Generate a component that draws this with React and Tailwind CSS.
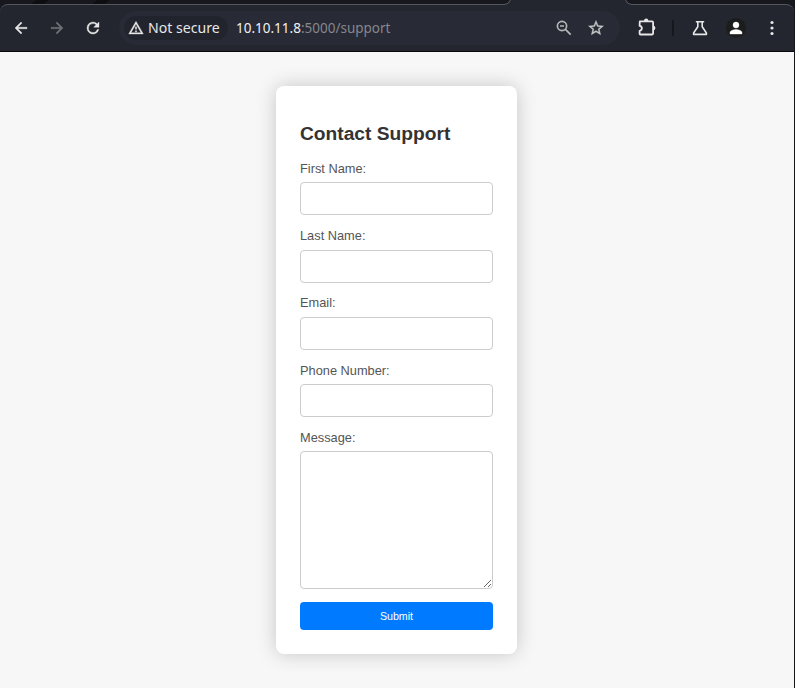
import React from "react";

const FIELDS = ["First Name:", "Last Name:", "Email:", "Phone Number:"];

function Icon({ d, size = 18, className = "" }) {
  return (
    <svg
      viewBox="0 0 24 24"
      width={size}
      height={size}
      fill="currentColor"
      stroke="currentColor"
      strokeWidth="0.5"
      className={"shrink-0 " + className}
    >
      <path d={d} />
    </svg>
  );
}

function TabStrip() {
  return (
    <div className="relative z-10 -mb-px flex h-[5px] w-full shrink-0 overflow-hidden">
      <div className="absolute top-0 left-[34px] h-1 w-3 -skew-x-[50deg] bg-[#0d0e11]" />
      <div className="absolute top-0 left-[95px] h-1 w-3 -skew-x-[50deg] bg-[#0d0e11]" />
      <div className="flex h-[5px] w-full items-end">
        <div className="h-[5px] w-[503px] shrink-0" />
        <div className="flex h-[5px] w-[130px] shrink-0 items-end justify-between bg-[#23252f]">
          <div className="h-4 w-2 shrink-0 rounded-br-[7px] border-r border-b border-[#55575d] bg-[#16181d]" />
          <div className="h-4 w-2 shrink-0 rounded-bl-[7px] border-b border-l border-[#55575d] bg-[#16181d]" />
        </div>
      </div>
    </div>
  );
}

function Toolbar() {
  return (
    <div className="flex h-12 shrink-0 items-center rounded-t-[8px] border-t border-[#55575d] bg-[#23252f] pb-px font-['Noto_Sans',sans-serif] text-[#e6e7e6] shadow-[inset_0_-1px_0_#08090b]">
      <Icon className="ml-3" d="M20 11H7.83l5.59-5.59L12 4l-8 8 8 8 1.41-1.41L7.83 13H20v-2z" />
      <Icon className="ml-[18px] text-[#707278]" d="m12 4-1.41 1.41L16.17 11H4v2h12.17l-5.58 5.59L12 20l8-8z" />
      <Icon className="ml-[18px]" d="M17.65 6.35A7.96 7.96 0 0 0 12 4a8 8 0 1 0 7.73 10h-2.08A6 6 0 1 1 12 6c1.66 0 3.14.69 4.22 1.78L13 11h7V4z" />
      <div className="ml-[17px] flex h-[34px] w-[501px] items-center rounded-full bg-[#282a36] pl-[5px]">
        <div className="flex h-6 w-[104px] items-center rounded-full bg-[#22242d] pl-1">
          <Icon size={16} d="M12 5.99 19.53 19H4.47L12 5.99M12 2 1 21h22L12 2zm1 14h-2v2h2v-2zm0-6h-2v4h2v-4z" />
          <span className="mb-px ml-1 text-[14.1px] leading-5 whitespace-nowrap">Not secure</span>
        </div>
        <span className="ml-2 text-[13.5px] whitespace-nowrap text-[#f0f1f0]">
          10.10.11.8<span className="text-[#85878d]">:5000/support</span>
        </span>
        <svg className="ml-auto shrink-0 text-[#b5b6b6]" width="18" height="18" viewBox="0 0 18 18" fill="none" stroke="currentColor" strokeWidth="1.7">
          <circle cx="7" cy="7" r="4.6" />
          <path d="M10.4 10.4l5.3 5.3M5 7h4" />
        </svg>
        <Icon className="mr-[15px] ml-[14px] text-[#c5c6c5]" d="m22 9.24-7.19-.62L12 2 9.19 8.63 2 9.24l5.46 4.73L5.82 21 12 17.27 18.18 21l-1.63-7.03zM12 15.4l-3.76 2.27 1-4.28-3.32-2.88 4.38-.38L12 6.1l1.71 4.04 4.38.38-3.32 2.88 1 4.28z" />
      </div>
      <svg className="ml-[17px] shrink-0" width="20" height="20" viewBox="0 0 20 20" fill="none" stroke="currentColor" strokeWidth="1.8" strokeLinejoin="round">
        <path d="M2.8 3.4h12.4q.9 0 .9.9v11.3q0 .9-.9.9H3.5q-.9 0-.9-.9v-2.8c3-.4 3-4.6 0-5z" />
        <path d="M7 3.2a2.2 2.8 0 0 1 4.4 0zM16.2 7.8a2.2 2.2 0 0 1 0 4.4z" fill="currentColor" stroke="none" />
      </svg>
      <div className="ml-[15px] h-4 w-0.5 bg-[#15171d]" />
      <svg className="ml-[17px] shrink-0" width="18" height="18" viewBox="0 0 18 18" fill="none" stroke="currentColor" strokeWidth="1.6" strokeLinejoin="round">
        <path d="M4.8 2.8h8.4M6.8 2.8v5L2.6 14v1.4h12.8V14l-4.2-6.2v-5" />
      </svg>
      <div className="ml-[17px] flex size-5 items-center justify-center rounded-full bg-[#1b1d1c]">
        <Icon size={18} className="text-white" d="M12 12a4 4 0 1 0 0-8 4 4 0 0 0 0 8zm0 2c-2.67 0-8 1.34-8 4v2h16v-2c0-2.66-5.33-4-8-4z" />
      </div>
      <svg className="ml-4 shrink-0" width="20" height="20" viewBox="0 0 20 20" fill="currentColor">
        <circle cx="10" cy="4.5" r="1.6" />
        <circle cx="10" cy="10" r="1.6" />
        <circle cx="10" cy="15.5" r="1.6" />
      </svg>
    </div>
  );
}

export default function App() {
  return (
    <div className="flex h-[688px] w-[795px] flex-col overflow-hidden border-r border-[#15161a] bg-[#f7f7f7] font-['Liberation_Sans',Arial,sans-serif]">
      <header className="flex h-[52px] shrink-0 flex-col bg-[#16181d]">
        <TabStrip />
        <Toolbar />
      </header>
      <main className="flex flex-1 justify-center pt-[34px]">
        <form className="mr-px flex h-[568px] w-[241px] flex-col rounded-[8px] bg-white px-6 shadow-[0_0_20px_rgba(0,0,0,0.2)]">
          <h2 className="mt-[37px] text-[19.2px] leading-[22px] font-bold text-[#333]">Contact Support</h2>
          <div className="mt-4 flex flex-col">
            {FIELDS.map((label) => (
              <label key={label} className="flex h-[67.2px] flex-col text-[12.8px] leading-[15px] text-[#555]">
                {label}
                <input className="mt-[6.4px] h-[33px] w-full rounded-[4px] border border-[#ccc] bg-white" />
              </label>
            ))}
          </div>
          <label className="flex flex-col text-[12.8px] leading-[15px] text-[#555]">
            Message:
            <textarea className="mt-[6px] h-[138px] w-full resize-y rounded-[4px] border border-[#ccc] bg-white" />
          </label>
          <button type="button" className="mt-[13px] h-7 w-full rounded-[4px] bg-[#007bff] text-[10.67px] text-white">
            Submit
          </button>
        </form>
      </main>
    </div>
  );
}
